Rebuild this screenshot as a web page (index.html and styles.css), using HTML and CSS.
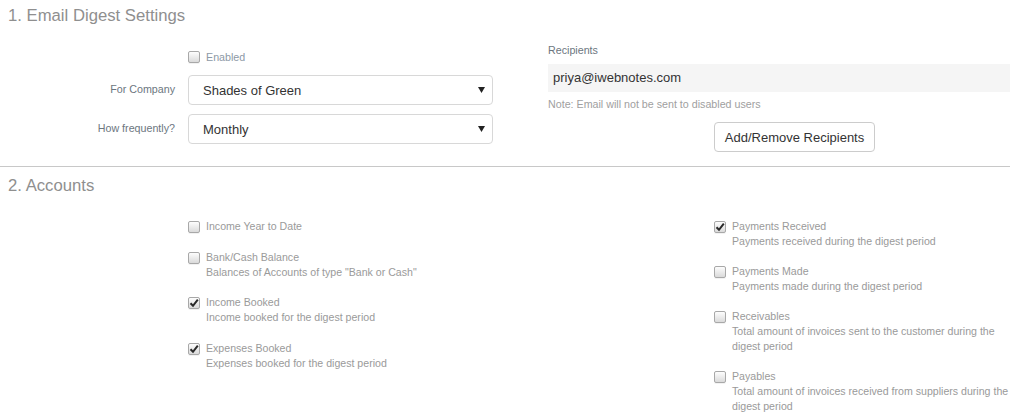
FILE: index.html
```html
<!DOCTYPE html>
<html>
<head>
<meta charset="utf-8">
<link rel="stylesheet" href="styles.css">
</head>
<body>
<section class="sec sec1">
  <h2 class="sec-title">1. Email Digest Settings</h2>
  <div class="sec1-body">
    <div class="form-col">
      <div class="check-row">
        <span class="cb"></span><span class="check-label">Enabled</span>
      </div>
      <div class="field-row">
        <div class="field-label">For Company</div>
        <div class="select"><span>Shades of Green</span><svg width="7" height="6" viewBox="0 0 7 6"><path d="M0 0H7L3.5 6Z" fill="#222"/></svg></div>
      </div>
      <div class="field-row">
        <div class="field-label">How frequently?</div>
        <div class="select"><span>Monthly</span><svg width="7" height="6" viewBox="0 0 7 6"><path d="M0 0H7L3.5 6Z" fill="#222"/></svg></div>
      </div>
    </div>
    <div class="recip-col">
      <div class="recip-label">Recipients</div>
      <div class="recip-box">priya@iwebnotes.com</div>
      <div class="note">Note: Email will not be sent to disabled users</div>
      <div class="btn-wrap"><button class="btn">Add/Remove Recipients</button></div>
    </div>
  </div>
</section>
<section class="sec sec2">
  <h2 class="sec-title">2. Accounts</h2>
  <div class="accounts">
    <div class="acc-col">
      <div class="item"><span class="cb"></span><div class="item-text"><div class="item-label">Income Year to Date</div></div></div>
      <div class="item"><span class="cb"></span><div class="item-text"><div class="item-label">Bank/Cash Balance</div><div class="item-desc">Balances of Accounts of type "Bank or Cash"</div></div></div>
      <div class="item"><span class="cb on"><svg width="10" height="10" viewBox="0 0 10 10"><path d="M1.5 5.2L4 7.8L8.8 1.6" fill="none" stroke="#2a2a2a" stroke-width="2"/></svg></span><div class="item-text"><div class="item-label">Income Booked</div><div class="item-desc">Income booked for the digest period</div></div></div>
      <div class="item"><span class="cb on"><svg width="10" height="10" viewBox="0 0 10 10"><path d="M1.5 5.2L4 7.8L8.8 1.6" fill="none" stroke="#2a2a2a" stroke-width="2"/></svg></span><div class="item-text"><div class="item-label">Expenses Booked</div><div class="item-desc">Expenses booked for the digest period</div></div></div>
    </div>
    <div class="acc-col right">
      <div class="item"><span class="cb on"><svg width="10" height="10" viewBox="0 0 10 10"><path d="M1.5 5.2L4 7.8L8.8 1.6" fill="none" stroke="#2a2a2a" stroke-width="2"/></svg></span><div class="item-text"><div class="item-label">Payments Received</div><div class="item-desc">Payments received during the digest period</div></div></div>
      <div class="item"><span class="cb"></span><div class="item-text"><div class="item-label">Payments Made</div><div class="item-desc">Payments made during the digest period</div></div></div>
      <div class="item"><span class="cb"></span><div class="item-text"><div class="item-label">Receivables</div><div class="item-desc">Total amount of invoices sent to the customer during the digest period</div></div></div>
      <div class="item"><span class="cb"></span><div class="item-text"><div class="item-label">Payables</div><div class="item-desc">Total amount of invoices received from suppliers during the digest period</div></div></div>
    </div>
  </div>
</section>
</body>
</html>
```
FILE: styles.css
```css
html, body {
  margin: 0;
  padding: 0;
  background: #fff;
  overflow: hidden;
}
body {
  font-family: "Liberation Sans", Arial, sans-serif;
  color: #333;
  width: 1010px;
  height: 415px;
}
.sec-title {
  margin: 0;
  font-weight: normal;
  font-size: 16.7px;
  line-height: 20px;
  color: #8f8f8f;
  padding-left: 8px;
}
.sec1 {
  border-bottom: 1px solid #c8c8c8;
  height: 167px;
  box-sizing: border-box;
}
.sec1 .sec-title {
  padding-top: 6px;
}
.sec1-body {
  display: flex;
  padding-top: 21px;
}
.form-col {
  width: 548px;
  flex: none;
}
.check-row {
  display: flex;
  align-items: center;
  height: 20px;
  padding-left: 188px;
}
.check-label {
  font-size: 10.7px;
  color: #8d99a6;
  margin-left: 6px;
}
.cb {
  display: inline-flex;
  align-items: center;
  justify-content: center;
  width: 12px;
  height: 12px;
  box-sizing: border-box;
  border: 1px solid #a8a8a8;
  border-radius: 2px;
  background: linear-gradient(#fdfdfd, #dadada);
  box-shadow: 0 1px 0 rgba(0,0,0,0.05);
  flex: none;
}
.field-row {
  display: flex;
  align-items: center;
  margin-top: 8px;
}
.field-row + .field-row {
  margin-top: 9px;
}
.field-label {
  width: 175px;
  text-align: right;
  font-size: 10.7px;
  color: #6c7680;
  margin-right: 13px;
  padding-bottom: 3px;
}
.select {
  width: 305px;
  height: 30px;
  box-sizing: border-box;
  border: 1px solid #d8d8d8;
  border-radius: 4px;
  display: flex;
  align-items: center;
  justify-content: space-between;
  padding: 0 7px 0 14px;
  font-size: 13px;
  color: #333;
}
.recip-col {
  width: 493px;
  flex: none;
  margin-top: -4px;
}
.recip-label {
  font-size: 10.7px;
  line-height: 15px;
  color: #6c7680;
}
.recip-box {
  margin-top: 6px;
  height: 28px;
  line-height: 28px;
  background: #f5f5f5;
  padding-left: 5px;
  font-size: 13px;
  color: #333;
}
.note {
  margin-top: 5px;
  font-size: 10.7px;
  line-height: 15px;
  color: #a0a0a0;
}
.btn-wrap {
  display: flex;
  justify-content: center;
  margin-top: 10px;
}
.btn {
  font-family: "Liberation Sans", Arial, sans-serif;
  font-size: 13px;
  color: #333;
  background: #fff;
  border: 1px solid #cccccc;
  border-radius: 4px;
  height: 30px;
  padding: 0 10px;
}
.sec2 .sec-title {
  padding-top: 9px;
}
.accounts {
  display: flex;
  padding-left: 188px;
  padding-top: 23px;
}
.acc-col {
  width: 526px;
  flex: none;
}
.acc-col.right {
  width: 296px;
}
.item {
  display: flex;
  align-items: flex-start;
  margin-bottom: 15.5px;
}
.right .item {
  margin-bottom: 15px;
}
.item .cb {
  margin-top: 2px;
}
.item-text {
  margin-left: 6px;
  font-size: 10.6px;
  line-height: 15px;
  color: #9a9a9a;
}
.item-desc {
  color: #9a9a9a;
}
```
